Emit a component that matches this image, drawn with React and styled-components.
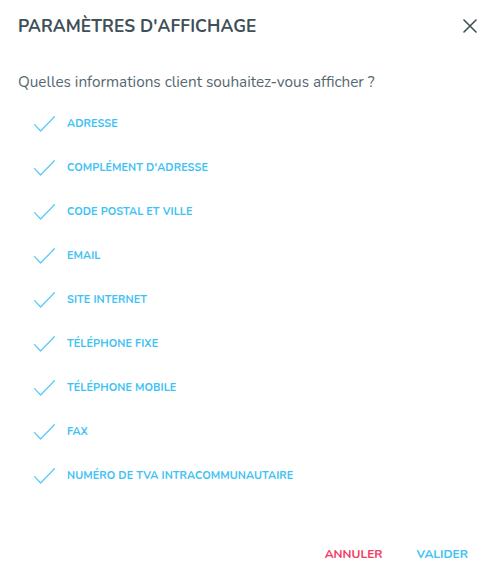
import React, { useState } from "react";
import styled, { createGlobalStyle } from "styled-components";

const GlobalStyle = createGlobalStyle`
  html, body {
    margin: 0;
    padding: 0;
    background: #ffffff;
  }
  body {
    font-family: "Nunito", Lato, "Open Sans", sans-serif;
  }
`;

const Dialog = styled.div`
  width: 492px;
  height: 573px;
  box-sizing: border-box;
  padding: 13px 14px 0 18px;
  display: flex;
  flex-direction: column;
  background: #fff;
`;

const Header = styled.div`
  display: flex;
  align-items: center;
  justify-content: space-between;
  height: 26px;
`;

const Title = styled.h2`
  margin: 0;
  font-size: 17.3px;
  font-weight: 700;
  letter-spacing: 0.1px;
  color: #3f5058;
`;

const CloseButton = styled.button`
  border: 0;
  background: none;
  padding: 0;
  width: 16px;
  height: 16px;
  display: flex;
  align-items: center;
  justify-content: center;
  cursor: pointer;
  color: #3f5058;
`;

const Question = styled.p`
  margin: 32px 0 0;
  font-size: 15.3px;
  color: #556870;
  line-height: 22px;
`;

const OptionList = styled.ul`
  list-style: none;
  margin: 8px 0 0;
  padding: 0 0 0 16px;
  display: flex;
  flex-direction: column;
`;

const Option = styled.li`
  display: flex;
  align-items: center;
  height: 44px;
  gap: 12px;
  cursor: pointer;
  opacity: ${(p) => (p.$checked ? 1 : 0.5)};
`;

const CheckBox = styled.span`
  width: 21px;
  height: 16px;
  display: flex;
  align-items: center;
  justify-content: center;
  margin-top: 1px;
`;

const Label = styled.span`
  font-size: 10.8px;
  font-weight: 700;
  color: #3ec2f3;
  letter-spacing: 0.1px;
`;

const Footer = styled.div`
  margin-top: auto;
  display: flex;
  justify-content: flex-end;
  gap: 34px;
  padding: 0 10px 8px 0;
  height: 22px;
  align-items: center;
`;

const ActionButton = styled.button`
  border: 0;
  background: none;
  padding: 0;
  font-family: inherit;
  font-size: 12px;
  font-weight: 700;
  cursor: pointer;
  color: ${(p) => (p.$variant === "cancel" ? "#f23b5f" : "#3ec2f3")};
`;

const fields = [
  "ADRESSE",
  "COMPLÉMENT D'ADRESSE",
  "CODE POSTAL ET VILLE",
  "EMAIL",
  "SITE INTERNET",
  "TÉLÉPHONE FIXE",
  "TÉLÉPHONE MOBILE",
  "FAX",
  "NUMÉRO DE TVA INTRACOMMUNAUTAIRE",
];

const CheckIcon = () => (
  <svg width="21" height="16" viewBox="0 0 21 16" fill="none">
    <path
      d="M0.6 8.6 L6.6 15 L20.4 0.8"
      stroke="#5ccaf6"
      strokeWidth="1.3"
      strokeLinecap="round"
      strokeLinejoin="round"
    />
  </svg>
);

const CloseIcon = () => (
  <svg width="14" height="14" viewBox="0 0 14 14" fill="none">
    <path
      d="M1 1 L13 13 M13 1 L1 13"
      stroke="currentColor"
      strokeWidth="1.6"
      strokeLinecap="round"
    />
  </svg>
);

export default function App() {
  const [checked, setChecked] = useState(() => fields.map(() => true));

  const toggle = (i) =>
    setChecked((prev) => prev.map((v, j) => (j === i ? !v : v)));

  return (
    <>
      <GlobalStyle />
      <Dialog>
        <Header>
          <Title>PARAMÈTRES D'AFFICHAGE</Title>
          <CloseButton aria-label="Fermer">
            <CloseIcon />
          </CloseButton>
        </Header>

        <Question>Quelles informations client souhaitez-vous afficher ?</Question>

        <OptionList>
          {fields.map((field, i) => (
            <Option key={field} $checked={checked[i]} onClick={() => toggle(i)}>
              <CheckBox>{checked[i] && <CheckIcon />}</CheckBox>
              <Label>{field}</Label>
            </Option>
          ))}
        </OptionList>

        <Footer>
          <ActionButton $variant="cancel">ANNULER</ActionButton>
          <ActionButton>VALIDER</ActionButton>
        </Footer>
      </Dialog>
    </>
  );
}
